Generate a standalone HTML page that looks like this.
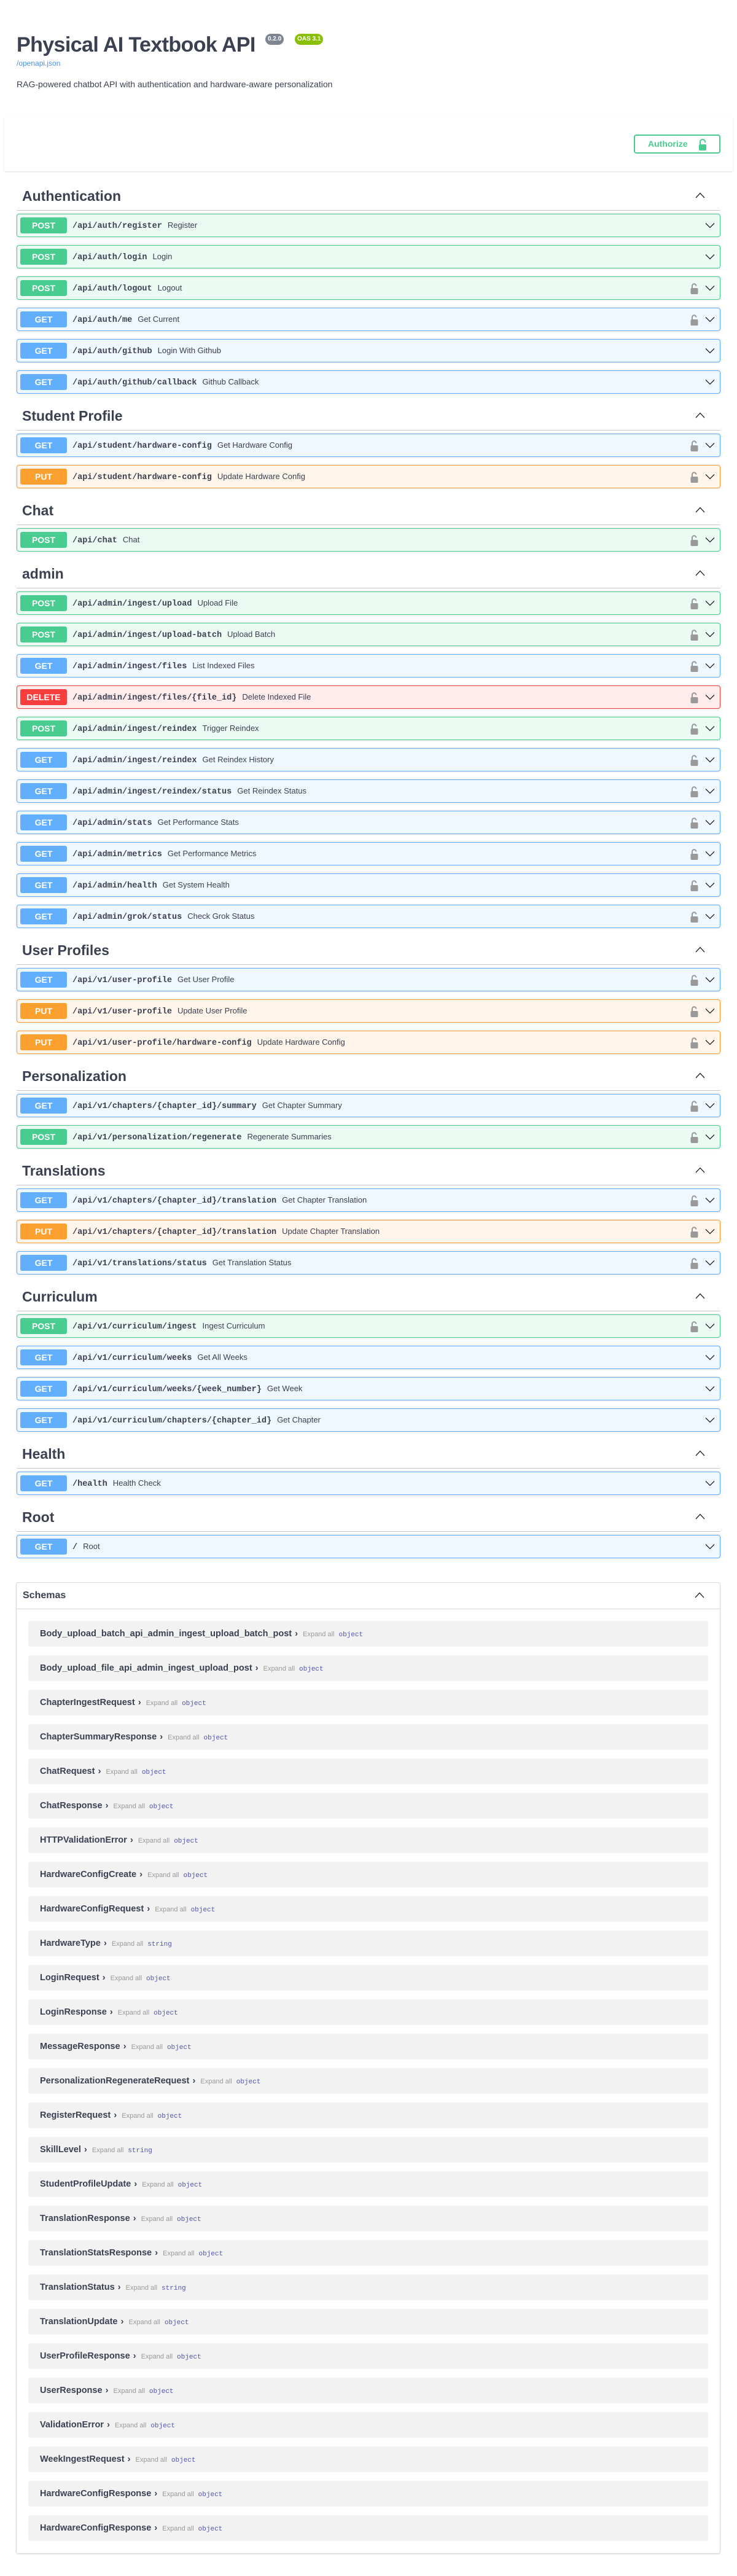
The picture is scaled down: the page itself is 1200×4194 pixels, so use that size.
<!DOCTYPE html>
<html><head><meta charset="utf-8">
<style>
*{box-sizing:border-box;margin:0;padding:0}
body{width:1200px;height:4194px;background:#fff;font-family:"Liberation Sans",Arial,sans-serif;color:#3b4151;position:relative;overflow:hidden}
.info{position:absolute;left:27px;top:0;width:1146px}
h1{position:absolute;top:55px;left:0;font-size:34px;line-height:36px;font-weight:bold;color:#3b4151;white-space:nowrap;letter-spacing:-0.6px}
.badge{position:absolute;top:55px;height:18px;border-radius:57px;color:#fff;font-size:10px;font-weight:bold;line-height:18px;padding:0 4px}
.link{position:absolute;top:96px;left:0;font-size:12px;color:#4990e2}
.desc{position:absolute;top:129px;left:0;font-size:14px}
.scheme{position:absolute;left:7px;top:190px;width:1186px;height:89px;background:#fff;box-shadow:0 1px 2px 0 rgba(0,0,0,.15)}
.auth{position:absolute;left:1025px;top:29px;width:141px;height:31px;border:2px solid #49cc90;border-radius:4px;color:#49cc90;font-weight:bold;font-size:14px;line-height:27px;padding-left:21px}
.auth svg{position:absolute;left:103px;top:5px}
.main{position:absolute;left:27px;top:296px;width:1146px}
.tag{height:47px;border-bottom:1px solid rgba(59,65,81,.3);margin-bottom:5px;position:relative}
.tag span{position:absolute;left:9px;top:10px;font-size:23px;font-weight:bold;line-height:27px}
.tag svg{position:absolute;right:25px;top:17px}
.op{height:38px;border:1px solid;border-radius:4px;margin-bottom:13px;position:relative;box-shadow:0 0 3px rgba(0,0,0,.19)}
.op .m{position:absolute;left:5px;top:5px;width:76px;height:26px;border-radius:3px;color:#fff;font-weight:bold;font-size:14px;line-height:26px;text-align:center}
.op .p{position:absolute;left:90px;top:0;line-height:36px;font-family:"Liberation Mono",monospace;font-weight:bold;font-size:13.5px;white-space:nowrap}
.op .p i{font-style:normal;font-family:"Liberation Sans",sans-serif;font-weight:normal;font-size:13px;margin-left:9px}
.op .lk{position:absolute;left:1096px;top:10px}
.op .cv{position:absolute;left:1120px;top:13px}
.post{background:rgba(73,204,144,.1);border-color:#49cc90}.post .m{background:#49cc90}
.get{background:rgba(97,175,254,.1);border-color:#61affe}.get .m{background:#61affe}
.put{background:rgba(252,161,48,.1);border-color:#fca130}.put .m{background:#fca130}
.del{background:rgba(249,62,62,.1);border-color:#f93e3e}.del .m{background:#f93e3e}
.schemas{position:absolute;left:26px;top:2576px;width:1147px;height:1582px;border:1px solid rgba(59,65,81,.2);border-radius:4px;box-shadow:0 1px 2px rgba(0,0,0,.1)}
.sh{height:43px;border-bottom:1px solid rgba(59,65,81,.2);position:relative}
.sh span{position:absolute;left:10px;top:12px;font-size:16px;font-weight:bold}
.sh svg{position:absolute;right:25px;top:15px}
.items{padding:19px 19px 0 19px}
.it{height:42px;background:rgba(0,0,0,.05);border-radius:4px;margin-bottom:14px;line-height:42px;padding-left:19px;white-space:nowrap}
.it b{font-size:14.5px;color:#3b4151}
.it .a{font-size:15px;font-weight:bold;margin:0 8px 0 5px}
.it .e{font-size:11px;color:#999;margin-right:7px}
.it .t{font-family:"Liberation Mono",monospace;font-size:11px;color:#55a}
</style></head><body>
<div class="info">
<h1>Physical AI Textbook API</h1>
<span class="badge" style="left:405px;background:#7d8492">0.2.0</span>
<span class="badge" style="left:453px;background:#89bf04">OAS 3.1</span>
<div class="link">/openapi.json</div>
<div class="desc">RAG-powered chatbot API with authentication and hardware-aware personalization</div>
</div>
<div class="scheme"><div class="auth">Authorize<svg width="14" height="20" viewBox="0 0 14 20"><path d="M3 9V5a4 4 0 0 1 8 0v1" fill="none" stroke="#49cc90" stroke-width="2"/><rect x="1" y="9" width="12" height="10" rx="2" fill="#49cc90"/></svg></div></div>
<div class="main" id="m"></div>
<div class="schemas"><div class="sh"><span>Schemas</span><svg width="16" height="10" viewBox="0 0 16 10"><path d="M1 9L8 1.5l7 7.5" fill="none" stroke="#222" stroke-width="1.3"/></svg></div><div class="items" id="s"></div></div>
<script>
var L='<svg class="lk" width="13" height="18" viewBox="0 0 13 18"><path d="M3 8V4.5a3.2 3.2 0 0 1 6.4 0" fill="none" stroke="#999" stroke-width="2"/><rect x="0.5" y="8" width="12" height="10" rx="2" fill="#999"/></svg>';
var C='<svg class="cv" width="16" height="10" viewBox="0 0 16 10"><path d="M1 1.5l7 7 7-7" fill="none" stroke="#222" stroke-width="1.3"/></svg>';
var U='<svg width="16" height="10" viewBox="0 0 16 10"><path d="M1 9L8 1.5l7 7.5" fill="none" stroke="#222" stroke-width="1.3"/></svg>';
var T=[["Authentication",[["post","/api/auth/register","Register",0],["post","/api/auth/login","Login",0],["post","/api/auth/logout","Logout",1],["get","/api/auth/me","Get Current",1],["get","/api/auth/github","Login With Github",0],["get","/api/auth/github/callback","Github Callback",0]]],
["Student Profile",[["get","/api/student/hardware-config","Get Hardware Config",1],["put","/api/student/hardware-config","Update Hardware Config",1]]],
["Chat",[["post","/api/chat","Chat",1]]],
["admin",[["post","/api/admin/ingest/upload","Upload File",1],["post","/api/admin/ingest/upload-batch","Upload Batch",1],["get","/api/admin/ingest/files","List Indexed Files",1],["del","/api/admin/ingest/files/{file_id}","Delete Indexed File",1],["post","/api/admin/ingest/reindex","Trigger Reindex",1],["get","/api/admin/ingest/reindex","Get Reindex History",1],["get","/api/admin/ingest/reindex/status","Get Reindex Status",1],["get","/api/admin/stats","Get Performance Stats",1],["get","/api/admin/metrics","Get Performance Metrics",1],["get","/api/admin/health","Get System Health",1],["get","/api/admin/grok/status","Check Grok Status",1]]],
["User Profiles",[["get","/api/v1/user-profile","Get User Profile",1],["put","/api/v1/user-profile","Update User Profile",1],["put","/api/v1/user-profile/hardware-config","Update Hardware Config",1]]],
["Personalization",[["get","/api/v1/chapters/{chapter_id}/summary","Get Chapter Summary",1],["post","/api/v1/personalization/regenerate","Regenerate Summaries",1]]],
["Translations",[["get","/api/v1/chapters/{chapter_id}/translation","Get Chapter Translation",1],["put","/api/v1/chapters/{chapter_id}/translation","Update Chapter Translation",1],["get","/api/v1/translations/status","Get Translation Status",1]]],
["Curriculum",[["post","/api/v1/curriculum/ingest","Ingest Curriculum",1],["get","/api/v1/curriculum/weeks","Get All Weeks",0],["get","/api/v1/curriculum/weeks/{week_number}","Get Week",0],["get","/api/v1/curriculum/chapters/{chapter_id}","Get Chapter",0]]],
["Health",[["get","/health","Health Check",0]]],
["Root",[["get","/","Root",0]]]];
var h='';T.forEach(function(t){h+='<div class="tag"><span>'+t[0]+'</span>'+U+'</div>';t[1].forEach(function(o){h+='<div class="op '+o[0]+'"><div class="m">'+(o[0]=='del'?'DELETE':o[0].toUpperCase())+'</div><div class="p">'+o[1]+'<i>'+o[2]+'</i></div>'+(o[3]?L:'')+C+'</div>';});});
document.getElementById('m').innerHTML=h;
var S=["Body_upload_batch_api_admin_ingest_upload_batch_post","Body_upload_file_api_admin_ingest_upload_post","ChapterIngestRequest","ChapterSummaryResponse","ChatRequest","ChatResponse","HTTPValidationError","HardwareConfigCreate","HardwareConfigRequest","HardwareType","LoginRequest","LoginResponse","MessageResponse","PersonalizationRegenerateRequest","RegisterRequest","SkillLevel","StudentProfileUpdate","TranslationResponse","TranslationStatsResponse","TranslationStatus","TranslationUpdate","UserProfileResponse","UserResponse","ValidationError","WeekIngestRequest","HardwareConfigResponse","HardwareConfigResponse"];
var st={HardwareType:1,SkillLevel:1,TranslationStatus:1};
var g='';S.forEach(function(n){g+='<div class="it"><b>'+n+'</b><span class="a">›</span><span class="e">Expand all</span><span class="t">'+(st[n]?'string':'object')+'</span></div>';});
document.getElementById('s').innerHTML=g;
</script>
</body></html>
